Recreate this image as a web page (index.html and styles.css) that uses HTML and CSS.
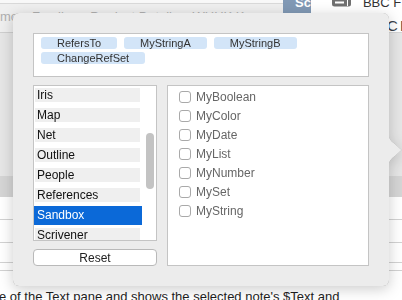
FILE: index.html
```html
<!DOCTYPE html>
<html>
<head>
<meta charset="utf-8">
<link rel="stylesheet" href="styles.css">
</head>
<body>
<div class="bg">
  <div class="topbar">
    <div class="tabs">
      <div class="tabs-line"></div>
      <div class="tabs-row">
        <span class="t1">mo</span>
        <span class="t2">Family</span>
        <span class="t3">Product Details</span>
        <span class="t4">WHHK Keywords</span>
        <span class="t5">Attributes</span>
      </div>
    </div>
    <div class="sc">Sc</div>
    <div class="tools">
      <div class="tool-row">
        <svg class="tool-icon" width="19" height="7" viewBox="0 0 19 7">
          <rect x="0" y="-6" width="19" height="12.5" rx="2.5" fill="#707070"/>
          <rect x="3" y="1.5" width="9" height="2" fill="#fff"/>
          <rect x="15" y="-6" width="1" height="12" fill="#fff"/>
        </svg>
        <span class="bbc">BBC F</span>
      </div>
      <div class="cf">C F</div>
    </div>
  </div>
  <div class="gray-area"></div>
  <div class="band"></div>
  <div class="row r1"></div>
  <div class="row r2"></div>
  <div class="row r3"></div>
  <div class="row r4"></div>
  <div class="row r5"></div>
  <p class="caption">e of the Text pane and shows the selected note's $Text and</p>
</div>

<div class="popover">
  <svg class="arrow" width="14" height="26" viewBox="0 0 14 26">
    <path d="M-1 0 L0 0 C1 3 3 5 6 7 L12.5 13 L6 19 C3 21 1 23 0 26 L-1 26 Z" fill="#ececec"/>
  </svg>
  <div class="tagbox">
    <span class="tag">RefersTo</span>
    <span class="tag">MyStringA</span>
    <span class="tag">MyStringB</span>
    <span class="tag">ChangeRefSet</span>
  </div>
  <div class="lower">
    <div class="left-col">
      <div class="list">
        <div class="items">
          <div class="item">Iris</div>
          <div class="item">Map</div>
          <div class="item">Net</div>
          <div class="item">Outline</div>
          <div class="item">People</div>
          <div class="item">References</div>
          <div class="item sel">Sandbox</div>
          <div class="item">Scrivener</div>
        </div>
        <div class="track"><div class="thumb"></div></div>
      </div>
      <div class="reset">Reset</div>
    </div>
    <div class="checks">
      <div class="check-row"><span class="box"></span>MyBoolean</div>
      <div class="check-row"><span class="box"></span>MyColor</div>
      <div class="check-row"><span class="box"></span>MyDate</div>
      <div class="check-row"><span class="box"></span>MyList</div>
      <div class="check-row"><span class="box"></span>MyNumber</div>
      <div class="check-row"><span class="box"></span>MySet</div>
      <div class="check-row"><span class="box"></span>MyString</div>
    </div>
  </div>
</div>
</body>
</html>
```

FILE: styles.css
```css
* { box-sizing: border-box; }
html, body { margin: 0; padding: 0; }
body {
  width: 402px;
  height: 300px;
  overflow: hidden;
  position: relative;
  background: #fff;
  font-family: "Liberation Sans", Arial, sans-serif;
}

/* background window */
.topbar { display: flex; height: 33px; }
.tabs {
  width: 283px;
  background: #efefef;
  border-bottom: 1px solid #cfcfcf;
}
.tabs-line { height: 4px; background: #f8f8f8; border-bottom: 1px solid #d9d9d9; }
.tabs-row {
  display: flex;
  padding-top: 6px;
  font-size: 13px;
  line-height: 14px;
  color: #b0b0b0;
  white-space: nowrap;
  overflow: hidden;
}
.t1 { margin-left: 0; }
.t2 { margin-left: 14px; }
.t3 { margin-left: 20px; }
.t4 { margin-left: 14px; }
.t5 { margin-left: 16px; }

.sc {
  width: 29px;
  height: 16px;
  background: #8199b5;
  color: #fff;
  font-weight: bold;
  font-size: 13px;
  line-height: 6px;
  padding-left: 12px;
}
.tools { flex: 1; background: #fff; border-bottom: 1px solid #d5d5d5; }
.tool-row { display: flex; height: 19px; }
.tool-icon { margin-left: 21px; }
.bbc {
  margin-left: 12px;
  font-size: 13px;
  line-height: 6px;
  color: #333;
  white-space: nowrap;
}
.cf {
  margin-left: 76px;
  font-size: 15px;
  line-height: 13px;
  color: #3a3f48;
  white-space: nowrap;
  word-spacing: -2px;
}

.gray-area { height: 143px; background: #e6e6e6; }
.band { height: 21px; background: #d5d5d5; }
.row { background: #fff; border-bottom: 1px solid #d2d2d2; }
.r1 { height: 23px; }
.r2 { height: 23px; }
.r3 { height: 20px; }
.r4 { height: 8px; }
.r5 { height: 18px; border-bottom: none; }
.caption {
  margin: 0;
  font-size: 13px;
  line-height: 16px;
  color: #1e1e1e;
  white-space: nowrap;
  text-indent: -1px;
}

/* popover */
.popover {
  position: absolute;
  left: 13px;
  top: 13px;
  width: 376px;
  height: 273px;
  background: #ececec;
  border-radius: 6px;
  padding: 20px;
  display: flex;
  flex-direction: column;
  gap: 8px;
  filter: drop-shadow(0 0 0.6px rgba(0,0,0,0.35)) drop-shadow(0 3px 7px rgba(0,0,0,0.2));
}
.arrow { position: absolute; left: 376px; top: 124px; }

.tagbox {
  height: 44px;
  background: #fff;
  border: 1px solid #c4c4c4;
  padding: 3px 7px;
  display: flex;
  flex-wrap: wrap;
  align-content: flex-start;
  gap: 3px 7px;
}
.tag {
  height: 12px;
  line-height: 12px;
  padding: 0 16px;
  border-radius: 3px;
  background: #d3e5f8;
  font-size: 11px;
  color: #333;
  white-space: nowrap;
}

.lower { display: flex; gap: 10px; height: 181px; }
.left-col { width: 124px; display: flex; flex-direction: column; gap: 8px; }
.list {
  height: 156px;
  background: #fff;
  border: 1px solid #c4c4c4;
  display: flex;
  overflow: hidden;
}
.items {
  width: 112px;
  padding-top: 2px;
  display: flex;
  flex-direction: column;
  overflow: hidden;
}
.item {
  flex-shrink: 0;
  height: 14px;
  line-height: 14px;
  width: 105px;
  margin: 0 0 6px 1px;
  padding-left: 2px;
  background: #efefef;
  font-size: 12px;
  color: #111;
  white-space: nowrap;
}
.item.sel {
  height: 19px;
  line-height: 19px;
  width: 108px;
  margin: -2px 0 3px 0;
  padding-left: 3px;
  background: #0b69d8;
  color: #fff;
}
.track { width: 8px; padding-top: 47px; }
.thumb { height: 56px; background: #c3c3c3; border-radius: 4px; }

.reset {
  height: 17px;
  background: #fff;
  border: 1px solid #b9b9b9;
  border-radius: 4px;
  font-size: 12px;
  line-height: 15px;
  padding-top: 1px;
  text-align: center;
  color: #222;
}

.checks {
  flex: 1;
  background: #fff;
  border: 1px solid #c4c4c4;
  padding: 1px 0;
}
.check-row {
  height: 19px;
  display: flex;
  align-items: center;
  gap: 5px;
  padding-left: 11px;
  font-size: 12px;
  color: #666;
}
.box {
  width: 12px;
  height: 12px;
  border: 1px solid #a9a9a9;
  border-radius: 3px;
  background: #fff;
}
```
